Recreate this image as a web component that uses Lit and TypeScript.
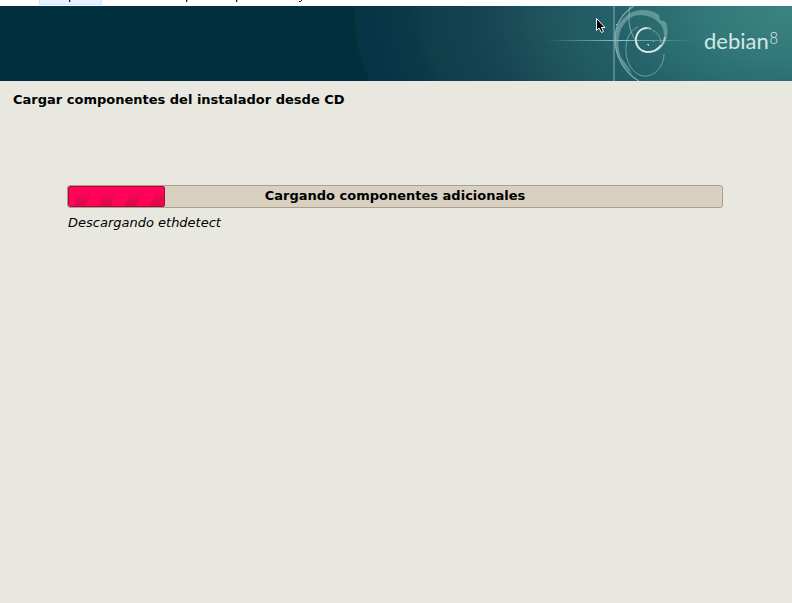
import { LitElement, html, css } from "lit";
import { customElement, property } from "lit/decorators.js";

@customElement("window-menu-edge")
class WindowMenuEdge extends LitElement {
  static styles = css`
    :host { display: block; height: 6px; background: #fff; overflow: hidden; }
    svg { display: block; }
  `;
  render() {
    return html`<svg width="320" height="6" aria-hidden="true" shape-rendering="crispEdges">
      <path d="M39.5 0V4.500H101.500V0" fill="#e5f3ff" stroke="#cce8ff" />
      <path d="M69 0h1v2h-1zM186 0h1v2h-1zM236 0h1v2h-1zM299 1h2v1h-2zM301 0h1v1h-1z" fill="#201020" />
      <path d="M70 0h1v2h-1zM187 0h1v2h-1zM237 0h1v2h-1z" fill="#9bcbf0" />
    </svg>`;
  }
}

@customElement("debian-banner")
class DebianBanner extends LitElement {
  static styles = css`
    :host {
      display: flex; position: relative; height: 75px; overflow: hidden;
      justify-content: flex-end; align-items: center;
      background: radial-gradient(ellipse 432px 250px at calc(100% - 8px) 8px,
        #3a837f 0%, #33787a 17%, #296a6f 32%, #235f68 42%, #205860 52%, #1c4f5a 60%,
        #184855 66%, #124250 74%, #113e4b 83%, #0a3a48 86%, #083647 93%, #063446 98%,
        #073641 99%, #002f3d 100%);
    }
    .swirl { flex: none; display: block; }
    .brand {
      flex: none; display: flex; align-items: flex-start; box-sizing: border-box;
      width: 92px; height: 40px; padding-left: 4px; color: #d3e8e4; white-space: nowrap;
    }
    .name { width: 65px; font: 22px/34px Lato, sans-serif; }
    .release { font: 200 15px/30px "DejaVu Sans", sans-serif; }
    .pointer { position: absolute; right: 185px; top: 11px; }
  `;
  render() {
    return html`
      <svg class="swirl" width="160" height="75" viewBox="540 6 160 75" fill="none" aria-hidden="true">
        <defs>
          <linearGradient id="ray" x1="546" x2="694" y1="0" y2="0" gradientUnits="userSpaceOnUse">
            <stop offset="0" stop-color="#b8d8d8" stop-opacity="0" />
            <stop offset=".5" stop-color="#c8e2e0" stop-opacity=".75" />
            <stop offset="1" stop-color="#b8d8d8" stop-opacity="0" />
          </linearGradient>
        </defs>
        <path d="M546 40H694V41H546Z" fill="url(#ray)" />
        <path d="M614 6V81" stroke="#7fb0b2" stroke-opacity=".5" stroke-width="2" />
        <path d="M634 6C621 14 615 25 615 40C615 57 625 73 639 81" stroke="#9cc4c4" stroke-opacity=".75" stroke-width="1.200" />
        <path d="M630 6C627 22 630 34 638 44" stroke="#9cc4c4" stroke-opacity=".7" />
        <path d="M625 17C633 9 649 7 659 15L660 20L666 22C670 35 666 46 656 50C665 43 666 33 661 25C654 15 638 12 630 18C618 27 616 43 621 57C624 62 629 67 632 74C620 64 614 50 615 37C616 28 619 22 625 17Z" fill="#88b4b6" fill-opacity=".6" />
        <path d="M638 27C630 30 626 39 626 47C625 61 632 74 643 76C654 77 664 67 664 54" stroke="#9cc4c4" stroke-opacity=".6" />
        <path d="M651 29C644 26 637 31 636 38C635 47 641 52 649 52C657 52 664 46 665 37" stroke="#c0d8d7" stroke-opacity=".7" stroke-width="2" />
        <path d="M647 28C640 28 637 33 636 38C635 46 641 52 648 52C653 52 658 49 661 45" stroke="#e5efee" stroke-width="1.300" />
        <path d="M652 30C657 32 661 37 661 43" stroke="#9cc4c4" stroke-opacity=".6" />
        <path d="M647 44h2v1h-2zM653 41h1v1h-1zM648 45h1v1h-1zM616 24h1v1h-1z" fill="#a2c8c8" />
      </svg>
      <div class="brand"><span class="name">debian</span><span class="release">8</span></div>
      <svg class="pointer" width="12" height="17" aria-hidden="true">
        <path d="M1.500 1.500V13.500L4 11L6.500 15.500L8.500 14.500L6.500 10.500H10L1.500 1.500Z" fill="#000" stroke="#fff" />
      </svg>`;
  }
}

@customElement("install-progress")
class InstallProgress extends LitElement {
  @property({ type: Number }) value = 0;
  @property() label = "";
  static styles = css`
    :host { display: block; }
    .track {
      position: relative; display: flex; height: 21px; overflow: hidden;
      border: 1px solid #b09f88; border-radius: 3px; background: #d8d0c0;
    }
    .bar {
      box-sizing: border-box; border: 1px solid #a5093f; border-radius: 2px;
      background:
        linear-gradient(#ff0458 0 4px, rgba(255, 4, 88, 0) 16px),
        repeating-linear-gradient(115deg, #ff0458 0 12px, #e0084c 12px 23px);
    }
    .label {
      position: absolute; inset: 0; text-align: center;
      font: bold 13px/20px "DejaVu Sans", sans-serif; color: #000;
    }
  `;
  render() {
    return html`<div class="track" role="progressbar" aria-label=${this.label} aria-valuenow=${this.value}>
      <div class="bar" style="width:${this.value}%"></div>
      <div class="label">${this.label}</div>
    </div>`;
  }
}

@customElement("app-root")
class AppRoot extends LitElement {
  static styles = css`
    :host {
      display: block; min-height: 100vh; background: #e8e8e0; color: #000;
      font: 13px/16px "DejaVu Sans", sans-serif;
    }
    h1 { margin: 0; padding: 11px 13px 0; font: bold 13px/16px "DejaVu Sans", sans-serif; }
    main { padding: 77px 69px 0 67px; }
    .status { margin: 7px 1px 0; font-style: italic; }
  `;
  render() {
    return html`
      <window-menu-edge></window-menu-edge>
      <debian-banner></debian-banner>
      <h1>Cargar componentes del instalador desde CD</h1>
      <main>
        <install-progress .value=${14.8} .label=${"Cargando componentes adicionales"}></install-progress>
        <p class="status">Descargando ethdetect</p>
      </main>`;
  }
}
